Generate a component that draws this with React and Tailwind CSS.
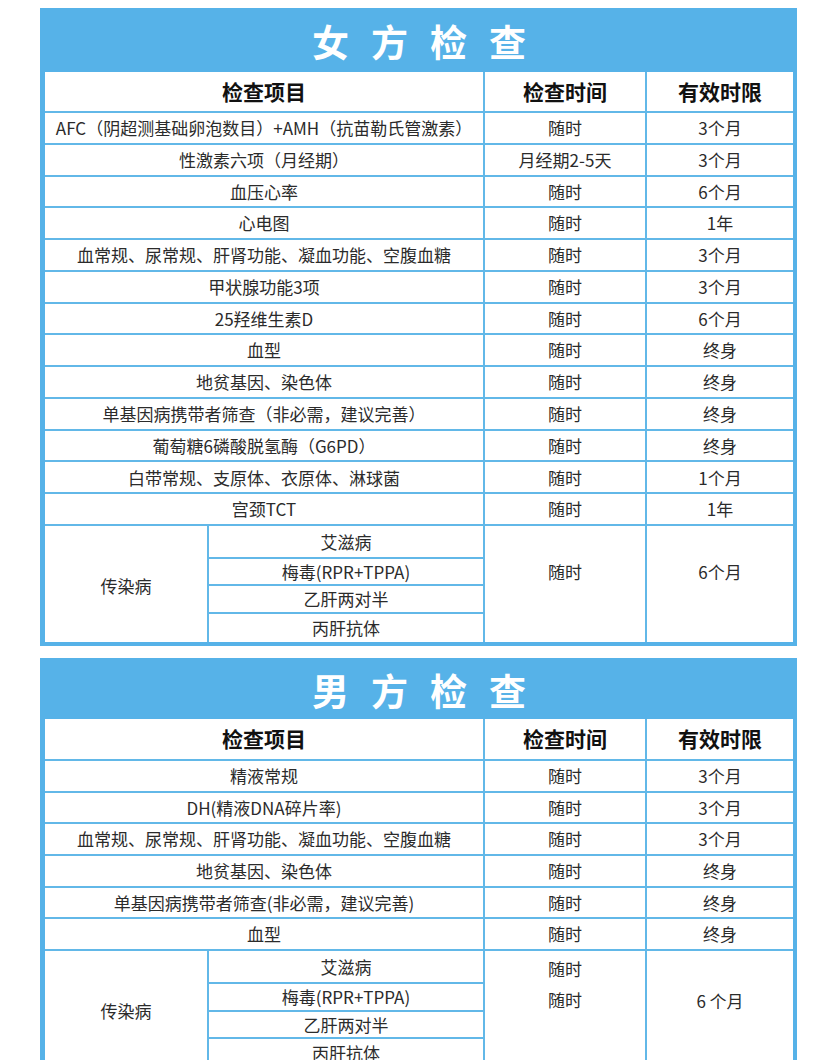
import React from "react";

const femaleRows = [
  ["AFC（阴超测基础卵泡数目）+AMH（抗苗勒氏管激素）", "随时", "3个月"],
  ["性激素六项（月经期）", "月经期2-5天", "3个月"],
  ["血压心率", "随时", "6个月"],
  ["心电图", "随时", "1年"],
  ["血常规、尿常规、肝肾功能、凝血功能、空腹血糖", "随时", "3个月"],
  ["甲状腺功能3项", "随时", "3个月"],
  ["25羟维生素D", "随时", "6个月"],
  ["血型", "随时", "终身"],
  ["地贫基因、染色体", "随时", "终身"],
  ["单基因病携带者筛查（非必需，建议完善）", "随时", "终身"],
  ["葡萄糖6磷酸脱氢酶（G6PD）", "随时", "终身"],
  ["白带常规、支原体、衣原体、淋球菌", "随时", "1个月"],
  ["宫颈TCT", "随时", "1年"],
];

const maleRows = [
  ["精液常规", "随时", "3个月"],
  ["DH(精液DNA碎片率)", "随时", "3个月"],
  ["血常规、尿常规、肝肾功能、凝血功能、空腹血糖", "随时", "3个月"],
  ["地贫基因、染色体", "随时", "终身"],
  ["单基因病携带者筛查(非必需，建议完善)", "随时", "终身"],
  ["血型", "随时", "终身"],
];

const infections = ["艾滋病", "梅毒(RPR+TPPA)", "乙肝两对半", "丙肝抗体"];

const cell = "border-2 border-[#62b8e8] p-0 text-center align-middle";

function Section({ title, band, rows, rowH, subH, timeCell, limitCell, headH }) {
  return (
    <div className="w-[757px] ml-[40px] bg-[#56b2e8] pt-[4px] pl-[5px] pr-[4px] pb-[4px]">
      <div
        className="flex items-center justify-center text-white text-[37px] font-bold tracking-[22px] pl-[22px]"
        style={{ height: band }}
      >
        {title}
      </div>
      <table className="w-[748px] table-fixed border-collapse border-hidden bg-white text-[17px] text-[#2b2b2b]">
        <colgroup>
          <col className="w-[163px]" />
          <col className="w-[276px]" />
          <col className="w-[162px]" />
          <col className="w-[147px]" />
        </colgroup>
        <tbody>
          <tr style={{ height: headH }}>
            <td colSpan={2} className={`${cell} text-[21px] font-bold text-[#111]`}>检查项目</td>
            <td className={`${cell} text-[21px] font-bold text-[#111]`}>检查时间</td>
            <td className={`${cell} text-[21px] font-bold text-[#111]`}>有效时限</td>
          </tr>
          {rows.map((r, i) => (
            <tr key={i} style={{ height: rowH }}>
              <td colSpan={2} className={`${cell} whitespace-nowrap`}>{r[0]}</td>
              <td className={cell}>{r[1]}</td>
              <td className={cell}>{r[2]}</td>
            </tr>
          ))}
          {infections.map((name, i) => (
            <tr key={name} style={{ height: subH[i] }}>
              {i === 0 && (
                <td rowSpan={4} className={`${cell} pt-[4px]`}>传染病</td>
              )}
              <td className={cell}>{name}</td>
              {i === 0 && timeCell}
              {i === 0 && limitCell}
            </tr>
          ))}
        </tbody>
      </table>
    </div>
  );
}

export default function App() {
  return (
    <div className="w-[830px] min-h-[1060px] bg-white overflow-hidden pt-[8px] font-['Noto_Sans_CJK_SC','Noto_Sans',sans-serif]">
      <Section
        title="女方检查"
        band={60}
        rows={femaleRows}
        rowH={31.77}
        headH={40}
        subH={[33, 27, 27, 29]}
        timeCell={<td rowSpan={4} className={`${cell} pb-[24px]`}>随时</td>}
        limitCell={<td rowSpan={4} className={`${cell} pb-[24px]`}>6个月</td>}
      />
      <div className="h-[12px]" />
      <Section
        title="男方检查"
        band={57}
        rows={maleRows}
        rowH={31.67}
        headH={41}
        subH={[33, 28, 26, 28]}
        timeCell={
          <td rowSpan={4} className={`${cell} align-top pt-[2px] leading-[31px]`}>
            随时<br />随时
          </td>
        }
        limitCell={
          <td rowSpan={4} className={`${cell} align-top pt-[34px] leading-[31px]`}>
            6 个月
          </td>
        }
      />
    </div>
  );
}
